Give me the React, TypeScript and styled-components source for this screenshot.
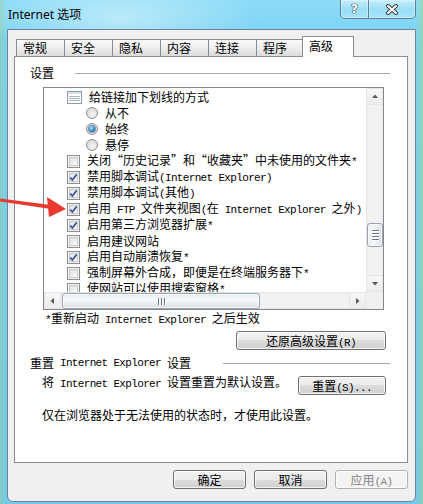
import React from 'react'
import styled, { createGlobalStyle, css } from 'styled-components'

const GlobalStyle = createGlobalStyle`
  html, body {
    margin: 0;
    padding: 0;
  }
  body {
    font-family: "Noto Sans CJK SC", "Noto Sans", sans-serif;
    font-size: 12px;
    color: #000;
  }
`

const Page = styled.div`
  position: relative;
  width: 423px;
  height: 504px;
  overflow: hidden;
  display: flex;
  flex-direction: column;
  background:
    radial-gradient(ellipse 140px 40px at 120px 18px, rgba(255, 255, 255, 0.45), transparent),
    linear-gradient(90deg, rgba(150, 205, 150, 0.5), transparent 7px, transparent 416px, rgba(170, 215, 120, 0.5)),
    linear-gradient(180deg, #8cdcf8 0%, #7ad2f3 40px, #72c9ec 100%);
`

const TitleBar = styled.div`
  height: 29px;
  flex: none;
  display: flex;
  justify-content: space-between;
  align-items: flex-start;
  padding: 0 7px 0 8px;
`

const Title = styled.div`
  margin-top: 7px;
  line-height: 16px;
  font-family: "Noto Sans", "Noto Sans CJK SC", sans-serif;
  font-size: 12px;
`

const Caption = styled.div`
  display: flex;
`

const CapButton = styled.div<{ $w: number; $first?: boolean }>`
  width: ${(p) => p.$w}px;
  height: 19px;
  box-sizing: border-box;
  display: flex;
  align-items: center;
  justify-content: center;
  border: 1px solid rgba(45, 75, 105, 0.65);
  border-top: none;
  ${(p) => (p.$first ? 'border-right: none; border-bottom-left-radius: 5px;' : 'border-bottom-right-radius: 5px;')}
  background: linear-gradient(rgba(255, 255, 255, 0.5), rgba(255, 255, 255, 0.15) 55%, rgba(255, 255, 255, 0.3));
  box-shadow: inset 0 0 0 1px rgba(255, 255, 255, 0.35);
`

const HelpGlyph = styled.span`
  font-family: "DejaVu Sans", sans-serif;
  font-weight: bold;
  font-size: 12px;
  line-height: 12px;
  color: #fff;
  text-shadow: 0 0 1px #333, 0 0 1px #333, 0 0 1px #333;
`

const Client = styled.div`
  flex: 1;
  margin: 0 7px 2px 7px;
  background: #f0f0f0;
  border: 1px solid #6f8397;
  border-radius: 0 0 6px 6px;
  padding: 6px 7px 0 6px;
  display: flex;
  flex-direction: column;
`

const TabStrip = styled.div`
  display: flex;
  align-items: flex-end;
  height: 20px;
  padding-left: 2px;
`

const Tab = styled.div<{ $active?: boolean }>`
  box-sizing: border-box;
  width: 49px;
  height: 17px;
  margin-left: -1px;
  &:first-child {
    margin-left: 0;
  }
  padding-left: 6px;
  line-height: 16px;
  border: 1px solid #898c95;
  border-bottom: none;
  background: linear-gradient(#fafafa, #ececec 55%, #dcdcdc);
  ${(p) =>
    p.$active &&
    css`
      position: relative;
      z-index: 1;
      width: 52px;
      height: 21px;
      margin-left: -3px;
      margin-bottom: -1px;
      padding-top: 1px;
      background: #fff;
    `}
`

const Panel = styled.div`
  box-sizing: border-box;
  height: 407px;
  flex: none;
  background: #fff;
  border: 1px solid #898c95;
  padding-top: 8px;
  display: flex;
  flex-direction: column;
`

const GroupHeader = styled.div`
  display: flex;
  align-items: center;
  height: 16px;
  padding: 0 17px 0 15px;
  line-height: 16px;
`

const GroupLine = styled.div<{ $gap: number }>`
  flex: 1;
  height: 1px;
  margin-left: ${(p) => p.$gap}px;
  background: #a9a9a9;
  box-shadow: 0 1px 0 #fff;
`

const ListBox = styled.div`
  box-sizing: border-box;
  width: 341px;
  height: 223px;
  margin: 6px 0 0 28px;
  border: 1px solid #828790;
  display: grid;
  grid-template-columns: 1fr 17px;
  grid-template-rows: 1fr 17px;
`

const Items = styled.div`
  overflow: hidden;
  padding-top: 1px;
  white-space: nowrap;
`

const Row = styled.div<{ $indent: number }>`
  height: 16px;
  display: flex;
  align-items: center;
  gap: 7px;
  padding-left: ${(p) => p.$indent}px;
  line-height: 16px;
`

const Box = styled.span`
  box-sizing: border-box;
  flex: none;
  width: 13px;
  height: 13px;
  border: 1px solid #8e8f8f;
  background: linear-gradient(135deg, #d8d8d8, #f6f6f6 70%, #fdfdfd);
  box-shadow: inset 0 0 0 1px #f4f4f4, inset 0 0 0 2px #c9cbcd;
  display: flex;
  align-items: center;
  justify-content: center;
`

const Radio = styled.span<{ $on?: boolean }>`
  box-sizing: border-box;
  flex: none;
  width: 12px;
  height: 12px;
  border-radius: 50%;
  border: 1px solid #8f9296;
  background: radial-gradient(circle at 55% 60%, #f8f8f8, #d9dadb 70%, #c6c8ca);
  display: flex;
  align-items: center;
  justify-content: center;
  ${(p) =>
    p.$on &&
    css`
      &::after {
        content: '';
        width: 6px;
        height: 6px;
        border-radius: 50%;
        background: radial-gradient(circle at 40% 35%, #b9ecff, #2a8ad0 55%, #0c3e78);
        box-shadow: 0 0 0 1px rgba(20, 60, 110, 0.5);
      }
    `}
`

const VScroll = styled.div`
  display: flex;
  flex-direction: column;
  background: linear-gradient(90deg, #e3e3e3, #f2f2f2 2px, #f2f2f2 15px, #e8e8e8);
`

const HScroll = styled.div`
  display: flex;
  background: linear-gradient(#e3e3e3, #f2f2f2 2px, #f2f2f2 15px, #e8e8e8);
`

const Corner = styled.div`
  background: #f0f0f0;
`

const ArrowBtn = styled.div<{ $push?: boolean }>`
  box-sizing: border-box;
  flex: none;
  width: 17px;
  height: 17px;
  ${(p) => p.$push && 'margin-top: auto;'}
  border: 1px solid #e6e6e6;
  border-radius: 2px;
  background: linear-gradient(#f7f7f7, #ececec);
  display: flex;
  align-items: center;
  justify-content: center;
`

const HArrowBtn = styled(ArrowBtn)`
  &:last-child {
    margin-left: auto;
  }
`

const VThumb = styled.div`
  box-sizing: border-box;
  flex: none;
  width: 16px;
  height: 24px;
  margin: 118px 0 0 1px;
  border: 1px solid #97a3b1;
  border-radius: 3px;
  background: linear-gradient(90deg, #e9ecef, #f7f8f9 45%, #d8dde3);
  box-shadow: inset 0 0 0 1px rgba(255, 255, 255, 0.8);
  display: flex;
  flex-direction: column;
  align-items: center;
  justify-content: center;
  gap: 2px;
`

const HThumb = styled.div`
  box-sizing: border-box;
  flex: none;
  width: 198px;
  height: 16px;
  margin: 1px 0 0 1px;
  border: 1px solid #97a3b1;
  border-radius: 3px;
  background: linear-gradient(#e9ecef, #f7f8f9 45%, #d8dde3);
  box-shadow: inset 0 0 0 1px rgba(255, 255, 255, 0.8);
  display: flex;
  align-items: center;
  justify-content: center;
  gap: 2px;
`

const Grip = styled.span<{ $vertical?: boolean }>`
  width: ${(p) => (p.$vertical ? '1px' : '7px')};
  height: ${(p) => (p.$vertical ? '7px' : '1px')};
  background: #6a7482;
  box-shadow: ${(p) => (p.$vertical ? '1px 0 0 #fff' : '0 1px 0 #fff')};
`

const Note = styled.div`
  margin-left: 30px;
  line-height: 16px;
`

const Button = styled.div<{ $w: number; $disabled?: boolean }>`
  box-sizing: border-box;
  flex: none;
  width: ${(p) => p.$w}px;
  height: 19px;
  line-height: 17px;
  text-align: center;
  border: 1px solid #707070;
  border-radius: 3px;
  background: linear-gradient(#f2f2f2, #ebebeb 50%, #dddddd 50%, #cfcfcf);
  box-shadow: inset 0 0 0 1px rgba(255, 255, 255, 0.75);
  ${(p) =>
    p.$disabled &&
    css`
      border-color: #adb2b5;
      background: #f4f4f4;
      color: #838383;
    `}
`

const RestoreButton = styled(Button)`
  align-self: flex-end;
  margin: 3px 21px 0 0;
`

const SecondHeader = styled(GroupHeader)`
  margin-top: 5px;
`

const ResetRow = styled.div`
  display: flex;
  align-items: flex-start;
  margin-top: 3px;
  padding: 0 21px 0 27px;
  line-height: 16px;
`

const ResetButton = styled(Button)`
  margin: 2px 0 0 auto;
`

const Info = styled.div`
  margin: 12px 0 0 27px;
  line-height: 16px;
`

const Footer = styled.div`
  display: flex;
  justify-content: flex-end;
  gap: 8px;
  margin-top: 7px;
`

const Mono = styled.span`
  font-family: "Liberation Mono", monospace;
  font-size: 11px;
  letter-spacing: -0.66px;
  white-space: pre;
`

const Overlay = styled.svg`
  position: absolute;
  left: 0;
  top: 0;
  pointer-events: none;
`

// ASCII runs are drawn in a half-width mono font, as in the SimSun original
function T({ s }: { s: string }) {
  const parts = s.split(/([\x20-\x7e]+)/).filter(Boolean)
  return (
    <>
      {parts.map((p, i) => (/^[\x20-\x7e]+$/.test(p) ? <Mono key={i}>{p}</Mono> : <span key={i}>{p}</span>))}
    </>
  )
}

function Check({ on }: { on?: boolean }) {
  return (
    <Box>
      {on && (
        <svg width="9" height="9" viewBox="0 0 9 9">
          <path d="M1.3 4.6 L3.4 7 L7.7 1.4" fill="none" stroke="#3a4e92" strokeWidth="1.7" />
        </svg>
      )}
    </Box>
  )
}

function GroupIcon() {
  return (
    <svg width="15" height="13" viewBox="0 0 15 13" style={{ flex: 'none' }}>
      <rect x="0.5" y="0.5" width="14" height="12" fill="#fff" stroke="#8d9aab" />
      <rect x="1" y="1" width="13" height="2" fill="#d4e3f2" />
      <path d="M2 5.5 H13 M2 7.5 H13 M2 9.5 H13" stroke="#a8b5c4" />
    </svg>
  )
}

function Tri({ dir }: { dir: 'up' | 'down' | 'left' | 'right' }) {
  const d = {
    up: 'M1 5 L4 1.5 L7 5 Z',
    down: 'M1 2 L4 5.5 L7 2 Z',
    left: 'M5 1 L1.5 4 L5 7 Z',
    right: 'M2 1 L5.5 4 L2 7 Z',
  }[dir]
  return (
    <svg width="8" height="8" viewBox="0 0 8 8">
      <path d={d} fill="#5a5a5a" />
    </svg>
  )
}

type Item =
  | { kind: 'group'; text: string }
  | { kind: 'radio'; text: string; on?: boolean }
  | { kind: 'check'; text: string; on?: boolean }

const items: Item[] = [
  { kind: 'group', text: '给链接加下划线的方式' },
  { kind: 'radio', text: '从不' },
  { kind: 'radio', text: '始终', on: true },
  { kind: 'radio', text: '悬停' },
  { kind: 'check', text: '关闭“历史记录”和“收藏夹”中未使用的文件夹*' },
  { kind: 'check', text: '禁用脚本调试(Internet Explorer)', on: true },
  { kind: 'check', text: '禁用脚本调试(其他)', on: true },
  { kind: 'check', text: '启用 FTP 文件夹视图(在 Internet Explorer 之外)', on: true },
  { kind: 'check', text: '启用第三方浏览器扩展*', on: true },
  { kind: 'check', text: '启用建议网站' },
  { kind: 'check', text: '启用自动崩溃恢复*', on: true },
  { kind: 'check', text: '强制屏幕外合成，即便是在终端服务器下*' },
  { kind: 'check', text: '使网站可以使用搜索窗格*' },
]

const tabs = ['常规', '安全', '隐私', '内容', '连接', '程序', '高级']

export default function App() {
  return (
    <Page>
      <GlobalStyle />
      <TitleBar>
        <Title>Internet 选项</Title>
        <Caption>
          <CapButton $w={28} $first>
            <HelpGlyph>?</HelpGlyph>
          </CapButton>
          <CapButton $w={48}>
            <svg width="14" height="11" viewBox="0 0 14 11">
              <path d="M3 2 L11 9 M11 2 L3 9" stroke="#3a3a3a" strokeWidth="4" strokeLinecap="round" />
              <path d="M3 2 L11 9 M11 2 L3 9" stroke="#fff" strokeWidth="2" strokeLinecap="round" />
            </svg>
          </CapButton>
        </Caption>
      </TitleBar>

      <Client>
        <TabStrip>
          {tabs.map((t) => (
            <Tab key={t} $active={t === '高级'}>
              {t}
            </Tab>
          ))}
        </TabStrip>

        <Panel>
          <GroupHeader>
            设置
            <GroupLine $gap={21} />
          </GroupHeader>

          <ListBox>
            <Items>
              {items.map((it) => (
                <Row key={it.text} $indent={it.kind === 'radio' ? 42 : 23}>
                  {it.kind === 'group' && <GroupIcon />}
                  {it.kind === 'radio' && <Radio $on={it.on} />}
                  {it.kind === 'check' && <Check on={it.on} />}
                  <span>
                    <T s={it.text} />
                  </span>
                </Row>
              ))}
            </Items>
            <VScroll>
              <ArrowBtn>
                <Tri dir="up" />
              </ArrowBtn>
              <VThumb>
                <Grip />
                <Grip />
                <Grip />
                <Grip />
              </VThumb>
              <ArrowBtn $push>
                <Tri dir="down" />
              </ArrowBtn>
            </VScroll>
            <HScroll>
              <HArrowBtn>
                <Tri dir="left" />
              </HArrowBtn>
              <HThumb>
                <Grip $vertical />
                <Grip $vertical />
                <Grip $vertical />
              </HThumb>
              <HArrowBtn>
                <Tri dir="right" />
              </HArrowBtn>
            </HScroll>
            <Corner />
          </ListBox>

          <Note>
            <T s="*重新启动 Internet Explorer 之后生效" />
          </Note>
          <RestoreButton $w={150}>
            <T s="还原高级设置(R)" />
          </RestoreButton>

          <SecondHeader>
            <T s="重置 Internet Explorer 设置" />
            <GroupLine $gap={32} />
          </SecondHeader>
          <ResetRow>
            <span>
              <T s="将 Internet Explorer 设置重置为默认设置。" />
            </span>
            <ResetButton $w={88}>
              <T s="重置(S)..." />
            </ResetButton>
          </ResetRow>
          <Info>仅在浏览器处于无法使用的状态时，才使用此设置。</Info>
        </Panel>

        <Footer>
          <Button $w={73}>确定</Button>
          <Button $w={73}>取消</Button>
          <Button $w={73} $disabled>
            <T s="应用(A)" />
          </Button>
        </Footer>
      </Client>

      <Overlay width="423" height="504" viewBox="0 0 423 504">
        <path d="M0 198.5 L51 205 L51 209 L0 201.5 Z" fill="#e8392f" />
        <path d="M47 197 L66 209 L49 217 Z" fill="#ea3a30" />
      </Overlay>
    </Page>
  )
}
